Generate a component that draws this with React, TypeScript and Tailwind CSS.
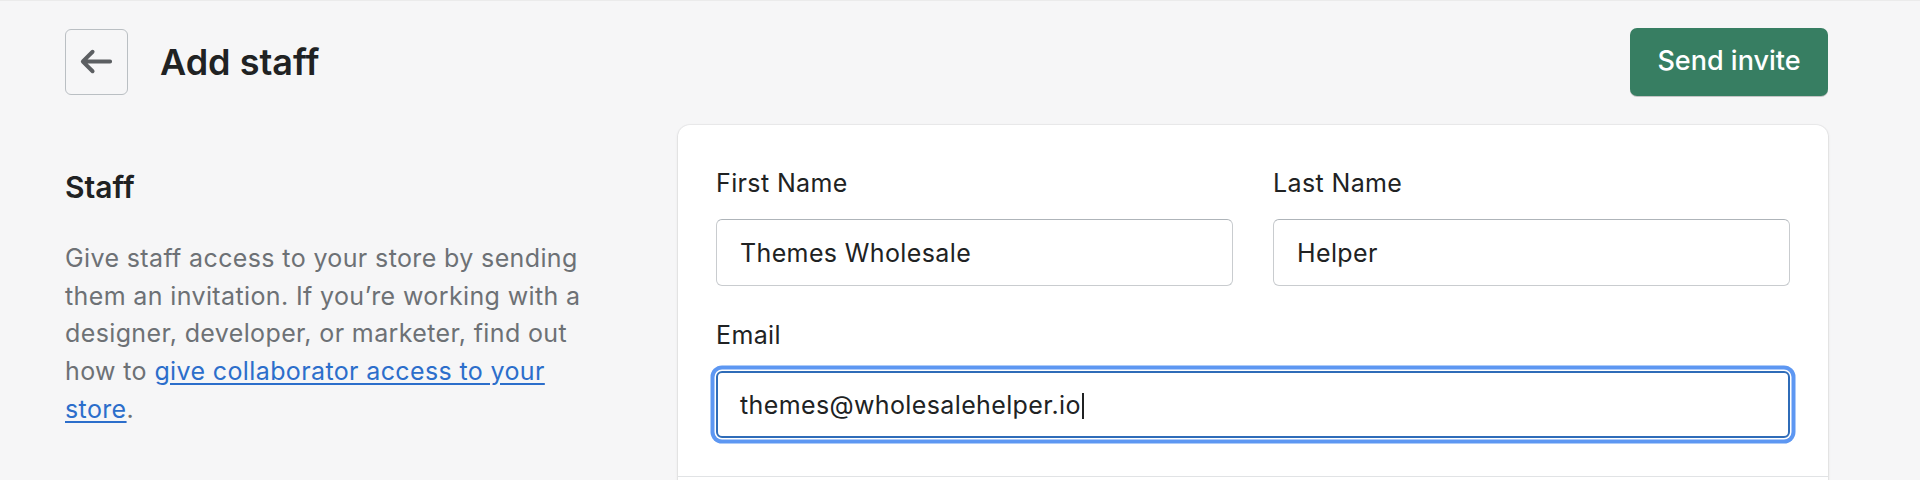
import React from "react";

const ArrowLeft = () => (
  <svg viewBox="0 0 20 20" className="h-[39px] w-[39px] fill-[#5c5f62]">
    <path d="M17 9H5.414l3.293-3.293a.999.999 0 1 0-1.414-1.414l-5 5a.999.999 0 0 0 0 1.414l5 5a.997.997 0 0 0 1.414 0 .999.999 0 0 0 0-1.414L5.414 11H17a1 1 0 1 0 0-2z" />
  </svg>
);

const Field = ({ label, value }: { label: string; value: string }) => (
  <div>
    <div className="text-[25px] leading-[30px] tracking-[0.015em] text-[#202223]">{label}</div>
    <div className="mt-[21px] flex h-[67px] items-center rounded-[6px] border border-[#c9cccf] border-t-[#aeb4b9] bg-white px-[23px] pt-[3px] text-[25px] tracking-[0.015em] text-[#202223]">
      {value}
    </div>
  </div>
);

const App = () => {
  return (
    <div className="min-h-[480px] border-t border-[#ebebeb] bg-[#f6f6f7] pl-[65px] pr-[92px] pt-[27px] font-['Inter',sans-serif]">
      <div className="flex h-[67px] items-center justify-between">
        <div className="flex items-center gap-[32px]">
          <button className="flex h-[66px] w-[63px] items-center justify-center rounded-[6px] border-[1.5px] border-[#babfc3]">
            <ArrowLeft />
          </button>
          <h1 className="text-[36px] font-semibold leading-[44px] text-[#202223]">Add staff</h1>
        </div>
        <button className="h-[68px] w-[198px] rounded-[7px] bg-[#377e62] text-[27px] font-medium text-white shadow-[0_1px_0_rgba(0,0,0,0.2)]">
          Send invite
        </button>
      </div>

      <div className="mt-[30px] grid grid-cols-[573px_1fr] gap-x-[40px]">
        <div className="pt-[44px]">
          <h2 className="text-[30px] font-semibold leading-[36px] text-[#202223]">Staff</h2>
          <p className="mt-[35px] max-w-[540px] text-[25px] leading-[37.7px] tracking-[0.015em] text-[#6d7175]">
            Give staff access to your store by sending them an invitation. If you’re working with a designer,
            developer, or marketer, find out how to{" "}
            <a className="text-[#2c6ecb] underline underline-offset-[3px]">give collaborator access to your store</a>.
          </p>
        </div>

        <div className="overflow-hidden rounded-[12px] bg-white shadow-[0_0_0_1px_rgba(63,63,68,0.05),0_1px_3px_0_rgba(63,63,68,0.15)]">
          <div className="border-b border-[#e1e3e5] px-[38px] pb-[38px] pt-[43px]">
            <div className="grid grid-cols-2 gap-x-[40px]">
              <Field label="First Name" value="Themes Wholesale" />
              <Field label="Last Name" value="Helper" />
            </div>
            <div className="mt-[34px]">
              <div className="text-[25px] leading-[30px] tracking-[0.015em] text-[#202223]">Email</div>
              <div className="mt-[21px] flex h-[67px] items-center rounded-[6px] border-2 border-[#2f6cb8] bg-white px-[22px] pt-[3px] text-[25px] tracking-[0.015em] text-[#202223] shadow-[0_0_0_1.5px_#fff,0_0_0_5.5px_#5d97f2]">
                themes@wholesalehelper.io
                <span className="ml-[1px] h-[26px] w-[2px] bg-[#202223]" />
              </div>
            </div>
          </div>
          <div className="h-[60px]" />
        </div>
      </div>
    </div>
  );
};

export default App;
